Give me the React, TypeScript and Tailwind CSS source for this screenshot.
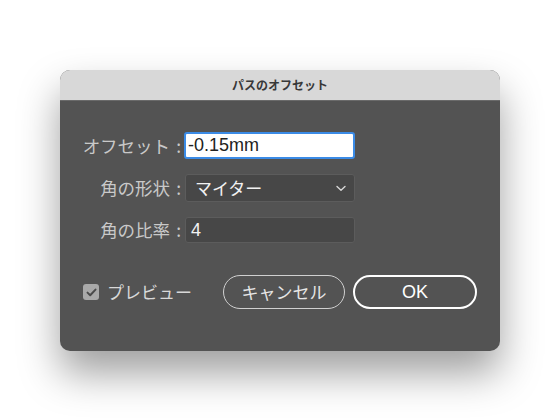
import React from 'react';

const Label: React.FC<{ text: string }> = ({ text }) => (
  <div className="flex items-center justify-end pr-[3px] text-[17.5px] text-[#c9c9c9] leading-none font-['Noto_Sans_CJK_JP','Liberation_Sans',sans-serif]">
    <span>{text}</span>
    <span className="ml-[6px]">:</span>
  </div>
);

const App: React.FC = () => {
  return (
    <div className="w-[560px] h-[420px] bg-white pt-[70px] pl-[60px] overflow-hidden">
      <div className="w-[440px] h-[281px] rounded-[10px] bg-[#535353] overflow-hidden shadow-[0_22px_40px_rgba(0,0,0,0.38)] flex flex-col">
        {/* Title bar */}
        <div className="h-[31px] bg-[#d8d8d8] border-b border-[#6a6a6a] flex items-center justify-center text-[12px] font-bold text-[#383838] font-['Noto_Sans_CJK_JP',sans-serif]">
          パスのオフセット
        </div>

        {/* Fields */}
        <div className="grid grid-cols-[104px_171px] gap-y-[15px] pl-[20px] pt-[31px]">
          <Label text="オフセット" />
          <div className="h-[27px] rounded-[3px] bg-white border-2 border-[#3b8be6] flex items-center pl-[2px] text-[18px] text-[#222] font-['Liberation_Sans',sans-serif]">
            -0.15mm
          </div>

          <Label text="角の形状" />
          <div className="h-[28px] ml-[1px] w-[170px] rounded-[3px] bg-[#474747] border border-[#5c5c5c] flex items-center justify-between pl-[9px] pr-[8px] text-[17px] text-[#f2f2f2] font-['Noto_Sans_CJK_JP',sans-serif]">
            <span>マイター</span>
            <svg width="10" height="7" viewBox="0 0 10 7" fill="none">
              <path d="M1 1.5 L5 5.2 L9 1.5" stroke="#d8d8d8" strokeWidth="1.4" strokeLinecap="round" strokeLinejoin="round" />
            </svg>
          </div>

          <Label text="角の比率" />
          <div className="h-[26px] ml-[1px] w-[170px] rounded-[3px] bg-[#474747] border border-[#5c5c5c] flex items-center pl-[5px] text-[18px] text-[#f2f2f2] font-['Liberation_Sans',sans-serif]">
            4
          </div>
        </div>

        {/* Bottom row */}
        <div className="flex items-center pl-[23px] pt-[32px]">
          <div className="w-[16px] h-[16px] rounded-[3px] bg-[#a9a9a9] flex items-center justify-center">
            <svg width="11" height="9" viewBox="0 0 11 9" fill="none">
              <path d="M1.5 4.6 L4.2 7.2 L9.5 1.6" stroke="#4a4a4a" strokeWidth="2" strokeLinecap="round" strokeLinejoin="round" />
            </svg>
          </div>
          <span className="ml-[8px] text-[17px] text-[#d8d8d8] font-['Noto_Sans_CJK_JP',sans-serif]">プレビュー</span>

          <button className="ml-[31px] w-[122px] h-[34px] rounded-full border border-[#d0d0d0] flex items-center justify-center text-[17px] text-[#e6e6e6] font-['Noto_Sans_CJK_JP',sans-serif]">
            キャンセル
          </button>
          <button className="ml-[8px] w-[124px] h-[34px] rounded-full border-2 border-white flex items-center justify-center text-[18px] text-white font-['Liberation_Sans',sans-serif]">
            OK
          </button>
        </div>
      </div>
    </div>
  );
};

export default App;
